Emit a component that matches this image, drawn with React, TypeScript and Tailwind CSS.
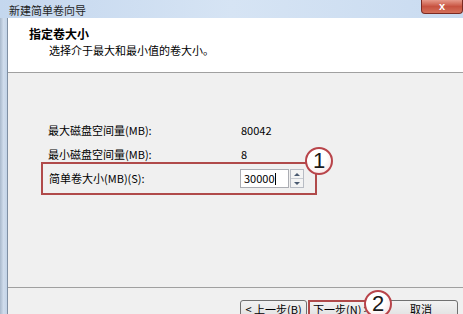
import React from 'react'

const font = { fontFamily: '"Noto Sans CJK SC", "Liberation Sans", sans-serif' }

function Circle({ n, className }: { n: string; className: string }) {
  return (
    <div
      className={`absolute w-[28px] h-[28px] rounded-full border-2 border-[#b8444a] bg-[radial-gradient(circle_at_40%_35%,#ffffff_45%,#f3d6d6_100%)] flex items-center justify-center text-[22px] font-medium leading-none text-[#1a1a1a] ${className}`}
      style={{ fontFamily: '"Liberation Sans", sans-serif' }}
    >
      {n}
    </div>
  )
}

export default function App() {
  return (
    <div className="w-[463px] h-[314px] overflow-hidden flex flex-col bg-[#c8daf0] relative" style={font}>
      {/* title bar */}
      <div className="h-[22px] flex items-start bg-gradient-to-r from-[#c4d7ee] via-[#d6e4f4] to-[#c9dbf0] relative">
        <span className="ml-[9px] mt-[2px] text-[11px] text-[#1e1e1e] leading-[16px]">新建简单卷向导</span>
        <div className="absolute right-[0px] top-0 w-[42px] h-[14px] rounded-b-[4px] border border-t-0 border-[#7a2a22] bg-gradient-to-b from-[#e6998a] via-[#c75240] to-[#d4705a] flex items-center justify-center">
          <span className="text-white text-[11px] font-bold leading-none" style={{ fontFamily: '"Liberation Sans", sans-serif' }}>x</span>
        </div>
      </div>

      <div className="flex-1 flex">
        {/* left frame */}
        <div className="w-[8px] bg-gradient-to-r from-[#a9b9cc] via-[#cfdcec] to-[#c3d4e8] border-r border-[#7f8fa3]" />

        <div className="flex-1 flex flex-col bg-[#f0f0f0]">
          {/* header */}
          <div className="h-[55px] bg-white border-b border-[#a0a0a0] pl-[21px] pt-[8px]">
            <div className="text-[12px] font-bold text-black leading-[16px]">指定卷大小</div>
            <div className="ml-[20px] text-[11px] text-black leading-[16px]">选择介于最大和最小值的卷大小。</div>
          </div>

          {/* body */}
          <div className="h-[215px] border-b border-[#a0a0a0] relative">
            <div className="pt-[45px] pl-[40px] flex flex-col text-[11px] text-black">
              <div className="flex h-[24px] items-center">
                <span className="w-[193px]">最大磁盘空间量(MB):</span>
                <span>80042</span>
              </div>
              <div className="flex h-[24px] items-center">
                <span className="w-[193px]">最小磁盘空间量(MB):</span>
                <span>8</span>
              </div>
            </div>
            <div className="ml-[33px] mt-[-4px] w-[276px] h-[33px] border-2 border-[#b04a4a] flex items-center pl-[6px] text-[11px] text-black">
              <span className="w-[191px]">简单卷大小(MB)(S):</span>
              <div className="w-[49px] h-[19px] bg-white border border-[#abadb3] flex items-center pl-[3px] text-[11px]">
                30000<span className="w-px h-[12px] bg-black" />
              </div>
              <div className="ml-[1px] w-[14px] h-[19px] border border-[#b8bcc4] flex flex-col bg-[#f4f4f4]">
                <div className="flex-1 flex items-center justify-center border-b border-[#c8ccd2]">
                  <div className="w-0 h-0 border-l-[3px] border-r-[3px] border-b-[3px] border-l-transparent border-r-transparent border-b-[#4a5a70]" />
                </div>
                <div className="flex-1 flex items-center justify-center">
                  <div className="w-0 h-0 border-l-[3px] border-r-[3px] border-t-[3px] border-l-transparent border-r-transparent border-t-[#4a5a70]" />
                </div>
              </div>
            </div>
          </div>

          {/* buttons */}
          <div className="flex pt-[12px] pl-[232px] gap-[1px] text-[11px] text-black">
            <div className="w-[67px] h-[23px] border border-[#707070] rounded-[3px] bg-gradient-to-b from-[#f2f2f2] to-[#dcdcdc] flex justify-center pt-[1px] leading-[14px]">&lt; 上一步(B)</div>
            <div className="w-[74px] h-[23px] border-2 border-[#b04a4a] bg-gradient-to-b from-[#f2f2f2] to-[#dcdcdc] pl-[3px] pt-[0px] leading-[14px]">下一步(N) &gt;</div>
            <div className="ml-[1px] w-[74px] h-[23px] border border-[#707070] rounded-[3px] bg-gradient-to-b from-[#f2f2f2] to-[#dcdcdc] flex justify-center pt-[1px] leading-[14px]">取消</div>
          </div>
        </div>
      </div>

      <Circle n="1" className="left-[305px] top-[147px]" />
      <Circle n="2" className="left-[364px] top-[290px]" />
    </div>
  )
}
